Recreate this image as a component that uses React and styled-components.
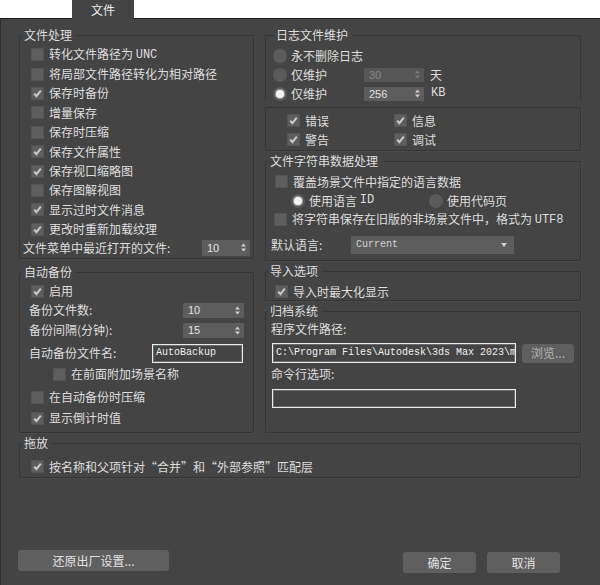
import React from 'react';
import styled, { createGlobalStyle } from 'styled-components';

const GlobalStyle = createGlobalStyle`
  html, body { margin: 0; padding: 0; background: #fff; }
  body {
    font-family: "Noto Sans CJK SC", "Noto Sans", sans-serif;
    font-size: 12px;
  }
`;

const Window = styled.div`
  width: 600px;
  height: 585px;
  display: flex;
  flex-direction: column;
  overflow: hidden;
`;

const TabBar = styled.div`
  height: 18px;
  flex: none;
  display: flex;
  padding-left: 72px;
  background: #fff;
`;

const Tab = styled.div`
  width: 62px;
  height: 19px;
  background: #444;
  color: #eee;
  display: flex;
  align-items: center;
  justify-content: center;
  position: relative;
  z-index: 1;
  line-height: 1;
`;

const Panel = styled.div`
  flex: 1;
  background: #444;
  border-top: 1px solid #1e1e1e;
  border-left: 1px solid #2c2c2c;
  padding: 16px 19px 0 18px;
  color: #dedede;
  display: flex;
  flex-direction: column;
  line-height: 14px;
`;

const Columns = styled.div`
  display: grid;
  grid-template-columns: 235px 316px;
  column-gap: 11px;
  align-items: start;
`;

const Column = styled.div`
  display: flex;
  flex-direction: column;
`;

const Group = styled.div`
  position: relative;
  box-sizing: border-box;
  height: ${p => p.$h}px;
  margin-top: ${p => p.$mt || 0}px;
  padding-top: ${p => p.$pt || 0}px;
  border: 1px solid #353535;
  border-bottom-color: ${p => (p.$open ? 'transparent' : '#353535')};
  border-radius: 2px;
  box-shadow: ${p => (p.$open ? 'none' : '1px 1px 0 #4a4a4a')};
`;

const Title = styled.span`
  position: absolute;
  top: -8px;
  left: ${p => p.$left || 2}px;
  padding: 0 4px 0 2px;
  background: #444;
  line-height: 14px;
  white-space: nowrap;
`;

const Row = styled.div`
  display: flex;
  align-items: center;
  height: ${p => p.$h || 19}px;
  margin-top: ${p => p.$mt || 0}px;
  padding-left: ${p => p.$in || 0}px;
  padding-right: ${p => p.$pr || 0}px;
  white-space: nowrap;
`;

const Cell = styled.div`
  display: flex;
  align-items: center;
  width: ${p => p.$w}px;
  margin-left: ${p => p.$ml || 0}px;
  flex: none;
`;

const Grow = styled.span`
  flex: 1;
`;

const Mono = styled.span`
  display: inline-block;
  font-family: "Liberation Mono", monospace;
  font-size: 12px;
  transform: translateY(-1px);
`;

const Box = styled.span`
  width: 13px;
  height: 13px;
  flex: none;
  box-sizing: border-box;
  background: #5e5e5e;
  border: 1px solid #545454;
  display: flex;
  align-items: center;
  justify-content: center;
  margin-right: 5px;
`;

const Dot = styled.span`
  width: 14px;
  height: 14px;
  flex: none;
  border-radius: 50%;
  background: #5a5a5a;
  display: flex;
  align-items: center;
  justify-content: center;
  margin-right: 4px;

  &::after {
    content: '';
    width: 8px;
    height: 8px;
    border-radius: 50%;
    background: ${p => (p.$on ? '#f4f4f4' : 'transparent')};
    box-shadow: ${p => (p.$on ? '0 0 1px 1px rgba(220, 220, 220, 0.55)' : 'none')};
  }
`;

const Spin = styled.div`
  width: ${p => p.$w}px;
  height: ${p => p.$h || 15}px;
  flex: none;
  box-sizing: border-box;
  padding: 0 4px 0 5px;
  background: ${p => (p.$off ? '#575757' : '#5d5d5d')};
  color: ${p => (p.$off ? '#868686' : '#e2e2e2')};
  display: flex;
  align-items: center;
  justify-content: space-between;
  font-family: "Liberation Sans", sans-serif;
  font-size: 11px;
  border-radius: 1px;
`;

const Field = styled.div`
  width: ${p => p.$w}px;
  height: ${p => p.$h}px;
  flex: none;
  box-sizing: border-box;
  border: 1px solid #ececec;
  box-shadow: inset 0 0 0 1px #6a6a6a;
  background: #444;
  color: #f0f0f0;
  padding-left: 3px;
  display: flex;
  align-items: center;
  overflow: hidden;
  white-space: nowrap;
  font-family: "Liberation Mono", monospace;
  font-size: 10px;
`;

const Select = styled.div`
  width: 163px;
  height: 18px;
  flex: none;
  box-sizing: border-box;
  padding: 0 7px 0 5px;
  background: #5d5d5d;
  color: #d2d2d2;
  display: flex;
  align-items: center;
  justify-content: space-between;
  font-family: "Liberation Mono", monospace;
  font-size: 10px;
`;

const Button = styled.button`
  width: ${p => p.$w}px;
  height: ${p => p.$h || 21}px;
  flex: none;
  margin-top: ${p => p.$mt || 0}px;
  margin-left: ${p => p.$ml || 0}px;
  padding: 0;
  border: none;
  border-radius: 3px;
  background: #5f5f5f;
  color: ${p => (p.$dim ? '#b4b4b4' : '#e2e2e2')};
  font-family: inherit;
  font-size: 12px;
  line-height: 1;
  display: flex;
  align-items: center;
  justify-content: center;
`;

const Footer = styled.div`
  display: flex;
  align-items: flex-start;
  margin-top: 72px;
  margin-left: -1px;
  padding-right: 21px;
`;

const Spacer = styled.div`
  flex: 1;
`;

const Check = ({ on }) => (
  <Box>
    {on && (
      <svg width="11" height="11" viewBox="0 0 11 11">
        <path d="M2.2 5.6 L4.4 8.2 L8.8 2.6" fill="none" stroke="#cacaca" strokeWidth="2" />
      </svg>
    )}
  </Box>
);

const Arrows = ({ off }) => (
  <svg width="5" height="9" viewBox="0 0 5 9">
    <path d="M0 3.5 L2.5 0.5 L5 3.5Z M0 5.5 L2.5 8.5 L5 5.5Z" fill={off ? '#7e7e7e' : '#d0d0d0'} />
  </svg>
);

const Spinner = ({ value, w, h, off }) => (
  <Spin $w={w} $h={h} $off={off}>
    <span>{value}</span>
    <Arrows off={off} />
  </Spin>
);

const CheckRow = ({ on, children, ...rest }) => (
  <Row {...rest}>
    <Check on={on} />
    <span>{children}</span>
  </Row>
);

const fileRows = [
  [false, <>转化文件路径为 <Mono>UNC</Mono></>],
  [false, '将局部文件路径转化为相对路径'],
  [true, '保存时备份'],
  [false, '增量保存'],
  [false, '保存时压缩'],
  [true, '保存文件属性'],
  [true, '保存视口缩略图'],
  [false, '保存图解视图'],
  [true, '显示过时文件消息'],
  [true, '更改时重新加载纹理'],
];

export default function App() {
  return (
    <Window>
      <GlobalStyle />
      <TabBar>
        <Tab>文件</Tab>
      </TabBar>
      <Panel>
        <Columns>
          <Column>
            <Group $h={224} $pt={9}>
              <Title>文件处理</Title>
              {fileRows.map(([on, text], i) => (
                <CheckRow key={i} on={on} $in={11} $h={19.4}>
                  {text}
                </CheckRow>
              ))}
              <Row $in={3} $pr={3} $h={18}>
                <Grow>文件菜单中最近打开的文件:</Grow>
                <Spinner value="10" w={48} h={16} />
              </Row>
            </Group>

            <Group $h={161} $mt={13} $pt={8}>
              <Title>自动备份</Title>
              <CheckRow on $in={11} $h={20}>启用</CheckRow>
              <Row $in={9} $pr={9} $h={20} $mt={-1}>
                <Grow>备份文件数:</Grow>
                <Spinner value="10" w={61} />
              </Row>
              <Row $in={9} $pr={9} $h={20}>
                <Grow>备份间隔(分钟):</Grow>
                <Spinner value="15" w={61} />
              </Row>
              <Row $in={9} $pr={10} $h={20} $mt={3}>
                <Grow>自动备份文件名:</Grow>
                <Field $w={91} $h={19}>AutoBackup</Field>
              </Row>
              <CheckRow $in={33} $h={20} $mt={1}>在前面附加场景名称</CheckRow>
              <CheckRow $in={11} $h={20} $mt={3}>在自动备份时压缩</CheckRow>
              <CheckRow on $in={11} $h={20} $mt={1}>显示倒计时值</CheckRow>
            </Group>
          </Column>

          <Column>
            <Group $h={66} $pt={10} $open>
              <Title $left={8}>日志文件维护</Title>
              <Row $in={7}>
                <Dot />
                <span>永不删除日志</span>
              </Row>
              <Row $in={7}>
                <Dot />
                <Cell $w={73}>仅维护</Cell>
                <Spinner value="30" w={60} h={14} off />
                <Cell $w={20} $ml={6}>天</Cell>
              </Row>
              <Row $in={7}>
                <Dot $on />
                <Cell $w={73}>仅维护</Cell>
                <Spinner value="256" w={60} h={14} />
                <Cell $w={20} $ml={7}><Mono>KB</Mono></Cell>
              </Row>
            </Group>

            <Group $h={44} $mt={6} $pt={3}>
              <Row $in={21}>
                <Cell $w={107}><Check on />错误</Cell>
                <Cell $w={80}><Check on />信息</Cell>
              </Row>
              <Row $in={21}>
                <Cell $w={107}><Check on />警告</Cell>
                <Cell $w={80}><Check on />调试</Cell>
              </Row>
            </Group>

            <Group $h={100} $mt={10} $pt={10}>
              <Title>文件字符串数据处理</Title>
              <CheckRow $in={9}>覆盖场景文件中指定的语言数据</CheckRow>
              <Row $in={25}>
                <Cell $w={138}><Dot $on />使用语言&nbsp;<Mono>ID</Mono></Cell>
                <Cell $w={120}><Dot />使用代码页</Cell>
              </Row>
              <CheckRow $in={8}>将字符串保存在旧版的非场景文件中，格式为 <Mono>UTF8</Mono></CheckRow>
              <Row $in={5} $h={18} $mt={7}>
                <Cell $w={80}>默认语言:</Cell>
                <Select>
                  <span>Current</span>
                  <svg width="6" height="4" viewBox="0 0 6 4">
                    <path d="M0 0 L6 0 L3 4Z" fill="#cfcfcf" />
                  </svg>
                </Select>
              </Row>
            </Group>

            <Group $h={30} $mt={10} $pt={10}>
              <Title>导入选项</Title>
              <CheckRow on $in={9}>导入时最大化显示</CheckRow>
            </Group>

            <Group $h={122} $mt={10} $pt={9}>
              <Title>归档系统</Title>
              <Row $in={5} $h={16}>程序文件路径:</Row>
              <Row $in={6} $h={20} $mt={6}>
                <Field $w={244} $h={20}>C:\Program Files\Autodesk\3ds Max 2023\m</Field>
                <Button $w={52} $h={19} $ml={6} $dim>浏览...</Button>
              </Row>
              <Row $in={5} $h={16} $mt={3}>命令行选项:</Row>
              <Row $in={6} $h={19} $mt={7}>
                <Field $w={244} $h={19} />
              </Row>
            </Group>
          </Column>
        </Columns>

        <Group $h={35} $mt={10} $pt={13}>
          <Title>拖放</Title>
          <CheckRow on $in={11}>按名称和父项针对“合并”和“外部参照”匹配层</CheckRow>
        </Group>

        <Footer>
          <Button $w={151}>还原出厂设置...</Button>
          <Spacer />
          <Button $w={73} $mt={2}>确定</Button>
          <Button $w={73} $mt={2} $ml={11}>取消</Button>
        </Footer>
      </Panel>
    </Window>
  );
}
